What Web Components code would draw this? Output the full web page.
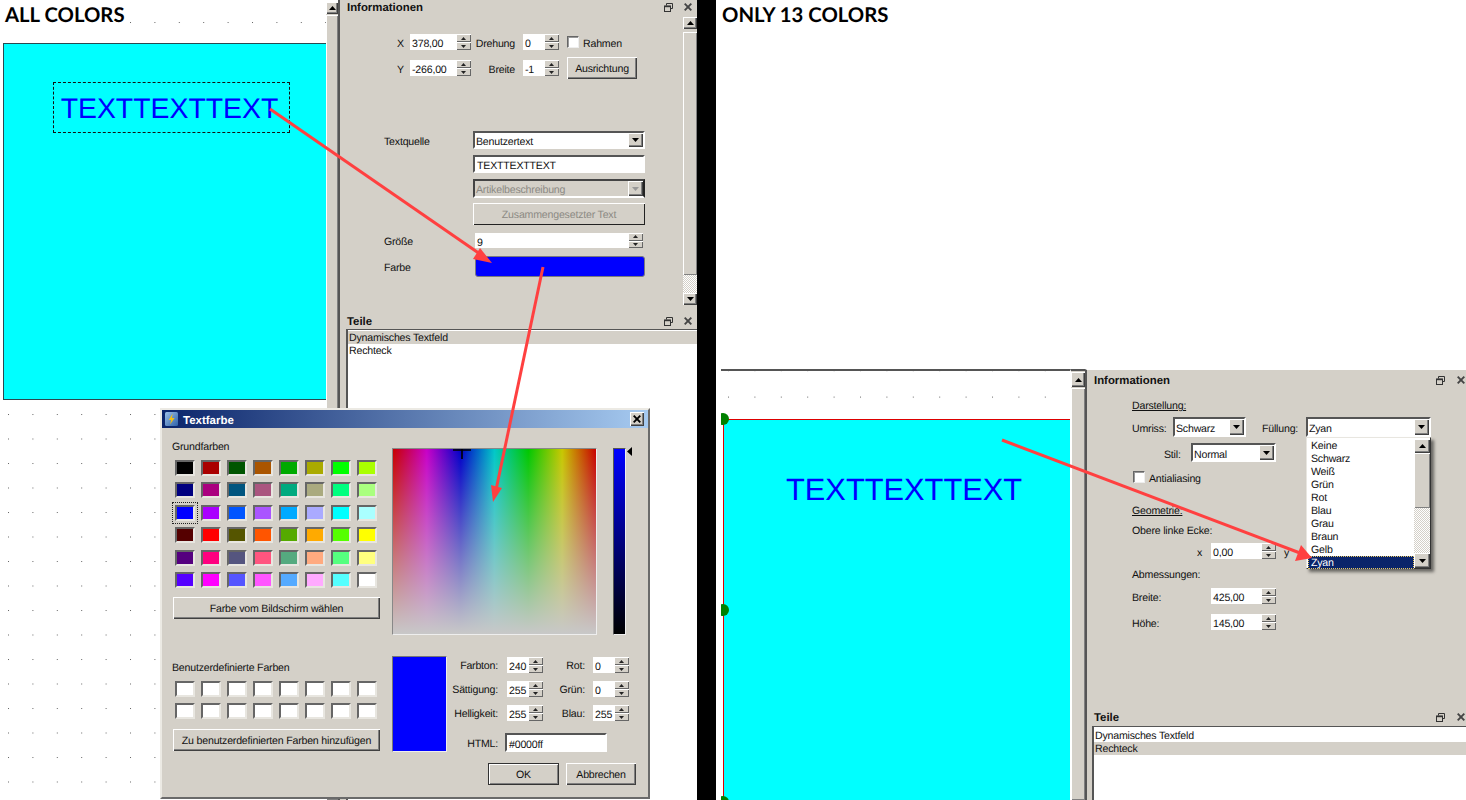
<!DOCTYPE html>
<html lang="de"><head><meta charset="utf-8"><title>Farben</title>
<style>
html,body{margin:0;padding:0;background:#fff}
body{width:1466px;height:800px;overflow:hidden;font:10.6px/14px "Liberation Sans",sans-serif;letter-spacing:-.2px;color:#111;text-rendering:geometricPrecision}
</style></head><body>
<x-stage>
  <x-workspace-left>
    <x-dialog></x-dialog>
  </x-workspace-left>
  <x-gap></x-gap>
  <x-workspace-right></x-workspace-right>
</x-stage>
<script>
const define=(name,css,render)=>customElements.define(name,class extends HTMLElement{
  connectedCallback(){ if(this.shadowRoot) return;
    const s=this.attachShadow({mode:'open'});
    s.innerHTML='<style>'+css+'</style>'+render(this);
  }
});
const A=(e,n,d)=>e.hasAttribute(n)?e.getAttribute(n):d;
const RAISED='box-shadow:inset 1px 1px 0 #fff,inset -1px -1px 0 #404040,inset -2px -2px 0 #808080;background:#d4d0c8;';
const tri=(up,c='#000',s=3)=>`<svg width="${s*2+1}" height="${s+1}" viewBox="0 0 ${s*2+1} ${s+1}" style="display:block"><polygon fill="${c}" points="${up?`0,${s+1} ${s*2+1},${s+1} ${s+.5},0`:`0,0 ${s*2+1},0 ${s+.5},${s+1}`}"/></svg>`;

define('x-gap',`:host{display:block;background:#000}`,()=>``);

define('x-spin',`:host{display:inline-flex;box-sizing:border-box}
 .i{background:#fff;padding:4px 0 0 2px;box-sizing:border-box;line-height:inherit;display:flex;align-items:center;white-space:nowrap}
 .b{width:15px;display:flex;flex-direction:column}
 .b div{flex:1;display:flex;align-items:center;justify-content:center;background:#d4d0c8;box-shadow:inset 1px 1px 0 #fff,inset -1px -1px 0 #666}`,
 e=>{const h=A(e,'h',16);return `<div class="i" style="width:${A(e,'w',46)}px;height:${h}px">${A(e,'value','')}</div><div class="b" style="height:${h}px"><div>${tri(1,'#222',2)}</div><div>${tri(0,'#222',2)}</div></div>`});

define('x-combo',`:host{display:flex;box-sizing:border-box;border:2px solid;border-color:#555 #fff #fff #555;background:#fff;align-items:stretch}
 :host([disabled]){background:#d4d0c8;color:#8c8a84;border-color:#444 #222 #fff #444}
 .t{flex:1;padding:4px 0 0 1px;display:flex;align-items:center;white-space:nowrap}
 :host([disabled]) .t{padding-top:2px}
 .a{width:15px;display:flex;align-items:center;justify-content:center;${RAISED}}`,
 e=>`<div class="t">${A(e,'value','')}</div><div class="a">${tri(0,e.hasAttribute('disabled')?'#999':'#000',3)}</div>`);

define('x-field',`:host{display:flex;align-items:center;box-sizing:border-box;border:2px solid;border-color:#555 #fff #fff #555;background:#fff;padding:4px 0 0 2px}`,e=>A(e,'value',''));

define('x-btn',`:host{display:flex;align-items:center;justify-content:center;box-sizing:border-box;white-space:nowrap;padding-top:2px;${RAISED}}
 :host([disabled]){color:#8c8a84;box-shadow:inset 1px 1px 0 #fff,inset -1px -1px 0 #222}
 :host([def]){outline:1px solid #333;outline-offset:-1px;box-shadow:inset 2px 2px 0 #fff,inset -2px -2px 0 #808080}`,()=>`<slot></slot>`);

define('x-check',`:host{display:flex;align-items:center;white-space:nowrap}
 .c{width:12px;height:12px;box-sizing:border-box;background:#fff;border:1px solid;border-color:#666 #eee #eee #666;box-shadow:inset 1px 1px 0 #999;margin-right:4px}
 span{padding-top:4px}`,
 e=>`<div class="c"></div><span><slot></slot></span>`);

define('x-sb',`:host{display:flex;flex-direction:column;box-sizing:border-box;background:#d4d0c8}
 .u{display:flex;align-items:center;justify-content:center;flex:none;${RAISED}}
 .t{${RAISED}box-shadow:inset 1px 1px 0 #fff,inset -1px -1px 0 #808080}
 .h{background:conic-gradient(#fff 25%,#d4d0c8 0 50%,#fff 0 75%,#d4d0c8 0);background-size:2px 2px}`,
 e=>{const up=A(e,'up',12),th=e.getAttribute('thumb'),ha=e.getAttribute('hatch'),dn=e.getAttribute('down'),gap=A(e,'gap',1);
  return `<div class="u" style="height:${up}px">${tri(1,'#000',3)}</div>
  <div class="t" style="margin-top:${gap}px;${th?`height:${th}px;flex:none`:'flex:1'}"></div>
  ${ha?`<div class="h" style="height:${ha}px;flex:none"></div>`:''}
  ${dn?`<div class="u" style="height:${dn}px">${tri(0,'#000',3)}</div>`:''}`});

define('x-dock-head',`:host{display:flex;align-items:center;padding-left:7px;box-sizing:border-box;font-weight:700;font-size:11.4px;letter-spacing:0;flex:none}
 .s{flex:1}
 span{padding-top:2px}
 svg{display:block;flex:none}`,
 e=>`<span>${A(e,'label','')}</span><div class="s"></div>
 <svg width="9" height="9" viewBox="0 0 9 9" fill="none" stroke="#333"><path d="M2.5 2.5V.5h6v5h-2"/><rect x=".5" y="3" width="6" height="5.5" fill="#d4d0c8"/><path d="M.5 3.5h6" stroke-width="1.4"/></svg>
 <svg width="8" height="8" viewBox="0 0 8 8" style="margin:0 ${A(e,'pr',5)}px 0 ${A(e,'gap',11)}px" fill="none" stroke="#444" stroke-width="1.9"><path d="M.7.7l6.6 6.6M7.3.7L.7 7.3"/></svg>`);

define('x-list',`:host{display:block;flex:1;background:#fff;box-sizing:border-box;border-top:1px solid #555;border-left:2px solid #555}
 div{height:13px;line-height:14px;padding-left:1px;white-space:nowrap}
 .sel{background:#d4d0c8}`,
 e=>`<style>:host{padding-top:${A(e,'pt',1)}px}</style>`+A(e,'items','').split('|').map((t,i)=>`<div class="${String(i)===A(e,'sel','')?'sel':''}">${t}</div>`).join(''));

define('x-canvas',`:host{display:block;position:relative;overflow:hidden;background:#fff}
 svg{position:absolute;left:0;top:0}`,
 e=>{const dx=+A(e,'dx',24.4),dy=+A(e,'dy',24.5),ox=+A(e,'ox',8),oy=+A(e,'oy',22);
  return `<svg width="100%" height="100%"><defs><pattern id="p" patternUnits="userSpaceOnUse" width="${dx}" height="${dy}" x="${ox}" y="${oy}"><rect width="1" height="1" fill="#666"/></pattern></defs><rect width="100%" height="100%" fill="url(#p)"/></svg><slot></slot>`});

define('x-shape',`:host{display:block;position:absolute;box-sizing:border-box;background:#0ff}`,()=>`<slot></slot>`);

define('x-label-text',`:host{position:absolute;display:block;color:#00f;font:var(--fs,28.4px)/1 "Liberation Sans",sans-serif;letter-spacing:0;white-space:nowrap}`,()=>`<slot></slot>`);

define('x-handle',`:host{position:absolute;display:block;width:12px;height:12px;border-radius:50%;background:#008000}`,()=>``);

define('x-note',`:host{position:absolute;z-index:4;display:block;background:#fff;color:#000;font:700 20.3px/26px Lato,"Open Sans",sans-serif;letter-spacing:0;white-space:nowrap;padding-right:4px}`,()=>`<slot></slot>`);

define('x-swatches',`:host{display:grid;grid-template-columns:repeat(8,20px);column-gap:6px;row-gap:6.4px}
 .s{position:relative;height:16px;box-sizing:border-box;border:2px solid;border-color:#666 #e8e6e0 #e8e6e0 #666}
 .f::after{content:"";position:absolute;left:-5px;top:-5px;width:26px;height:22px;box-sizing:border-box;border:1px dotted #222}`,
 e=>A(e,'colors','').split(' ').map((c,i)=>`<div class="s${String(i)===A(e,'focus','')?' f':''}" style="background:#${c}"></div>`).join(''));

define('x-dropdown',`:host{position:absolute;z-index:3;display:flex;box-sizing:border-box;width:125px;height:132px;background:#fff;border:1px solid;border-color:#e8e6e0 #333 #333 #e8e6e0;box-shadow:3px 3px 3px rgba(0,0,0,.5);padding:1px 0 0 1px}
 .l{flex:1;min-width:0}
 .l div{height:13px;line-height:15px;padding-left:3px;white-space:nowrap}
 .l .sel{background:#0a246a;color:#fff;outline:1px dotted #e8c860;outline-offset:-1px}
 x-sb{width:16px}`,
 e=>`<div class="l">${A(e,'items','').split('|').map((t,i,a)=>`<div class="${i==a.length-1?'sel':''}">${t}</div>`).join('')}</div>
 <x-sb up="14" gap="0" thumb="55" hatch="45" down="15"></x-sb>`);

const GRUND='000000 aa0000 005500 aa5500 00aa00 aaaa00 00ff00 aaff00 00007f aa007f 00557f aa557f 00aa7f aaaa7f 00ff7f aaff7f 0000ff aa00ff 0055ff aa55ff 00aaff aaaaff 00ffff aaffff 550000 ff0000 555500 ff5500 55aa00 ffaa00 55ff00 ffff00 55007f ff007f 55557f ff557f 55aa7f ffaa7f 55ff7f ffff7f 5500ff ff00ff 5555ff ff55ff 55aaff ffaaff 55ffff ffffff';
const WHITE=Array(16).fill('ffffff').join(' ');

define('x-dialog',`:host{position:absolute;left:160px;top:408px;width:490px;height:391px;z-index:2;box-sizing:border-box;background:#d4d0c8;border:2px solid;border-color:#eceae4 #6a6a6a #6a6a6a #eceae4;display:flex;flex-direction:column}
 .tb{height:18px;flex:none;display:flex;align-items:center;background:linear-gradient(90deg,#0a246a,#a6caf0);color:#fff;font-weight:700;font-size:11.5px;letter-spacing:0;padding-left:3px}
 .tb svg{margin-right:5px;display:block}
 .tb span{padding-top:3px}
 .cl{margin-left:auto;margin-right:4px;width:14px;height:14px;display:flex;align-items:center;justify-content:center;${RAISED}}
 .bd{display:flex;padding-left:10px;flex:1}
 .lc{width:208px;display:flex;flex-direction:column}
 .rc{margin-left:12px;display:flex;flex-direction:column}
 .sw{margin-left:3px}
 .top{display:flex;margin-top:20px;position:relative}
 .grad{width:205px;height:187px;box-sizing:border-box;border:1px solid;border-color:#888 #eee #eee #888;background:linear-gradient(180deg,rgba(200,200,200,0),#c8c8c8),linear-gradient(90deg,#c80000,#c800c8 16.67%,#0000c8 33.33%,#00c8c8 50%,#00c800 66.67%,#c8c800 83.33%,#c80000);position:relative}
 .cross{position:absolute;left:60px;top:0}
 .strip{margin-left:16px;width:13px;height:187px;background:linear-gradient(180deg,#00f,#000);box-sizing:border-box;border:1px solid;border-color:#555 #eee #eee #555}
 .ptr{margin-left:1px;margin-top:-1px;display:block}
 .bot{display:flex;margin-top:21px}
 .prev{width:55px;height:96px;background:#00f;box-sizing:border-box;border:1px solid;border-color:#777 #eee #eee #777}
 .form{display:grid;grid-template-columns:51px 45px 42px 44px;grid-template-rows:16px 16px 16px 23px;row-gap:8px;margin-top:1px;align-items:center}
 .form span{text-align:right;white-space:nowrap;padding-top:2px}
 .form x-spin{margin-left:9px}
 .form .g2{margin-left:8px}
 .html{grid-column:1/-1;display:flex;align-items:center;height:19px;align-self:end}
 .html span{width:51px}
 .html x-field{margin-left:7px;width:102px;height:19px}
 .btns{display:flex;margin:11px 0 0 96px;gap:7px}`,
 ()=>{
  const sp=(v)=>`<x-spin value="${v}" w="21" h="16"></x-spin>`;
  const sp2=(v)=>`<x-spin class="g2" value="${v}" w="21" h="16"></x-spin>`;
  return `<div class="tb"><svg width="13" height="14" viewBox="0 0 13 14"><defs><linearGradient id="ig" x1="0" y1="0" x2="1" y2="1"><stop offset="0" stop-color="#9cc0e8"/><stop offset="1" stop-color="#2f62a8"/></linearGradient></defs><rect width="13" height="14" rx="1.5" fill="url(#ig)"/><path d="M7.8 1.5L3.6 8h2.6L5 12.5 9.6 6H6.8z" fill="#f2c014"/></svg><span>Textfarbe</span><div class="cl"><svg width="8" height="8" viewBox="0 0 8 8" style="margin:0" fill="none" stroke="#000" stroke-width="1.9"><path d="M.7.7l6.6 6.6M7.3.7L.7 7.3"/></svg></div></div>
  <div class="bd">
   <div class="lc">
    <div style="margin-top:12px">Grundfarben</div>
    <x-swatches class="sw" style="margin-top:6px" focus="16" colors="${GRUND}"></x-swatches>
    <x-btn style="margin:9px 0 0 1px;width:207px;height:22px">Farbe vom Bildschirm wählen</x-btn>
    <div style="margin-top:42px">Benutzerdefinierte Farben</div>
    <x-swatches class="sw" style="margin-top:6px" colors="${WHITE}"></x-swatches>
    <x-btn style="margin:10px 0 0 1px;width:207px;height:22px">Zu benutzerdefinierten Farben hinzufügen</x-btn>
   </div>
   <div class="rc">
    <div class="top">
     <div class="grad"><svg class="cross" width="18" height="11" viewBox="0 0 18 11"><path d="M0 1h18M9 0v10" stroke="#000" stroke-width="1.6"/></svg></div>
     <div class="strip"></div>
     <svg class="ptr" width="5" height="9" viewBox="0 0 5 9"><polygon points="5,0 5,9 0,4.5" fill="#000"/></svg>
    </div>
    <div class="bot">
     <div class="prev"></div>
     <div class="form">
      <span>Farbton:</span>${sp(240)}<span>Rot:</span>${sp2(0)}
      <span>Sättigung:</span>${sp(255)}<span>Grün:</span>${sp2(0)}
      <span>Helligkeit:</span>${sp(255)}<span>Blau:</span>${sp2(255)}
      <div class="html"><span>HTML:</span><x-field value="#0000ff"></x-field></div>
     </div>
    </div>
    <div class="btns"><x-btn def style="width:71px;height:22px">OK</x-btn><x-btn style="width:70px;height:22px">Abbrechen</x-btn></div>
   </div>
  </div>`});

define('x-info-left',`:host{display:flex;flex-direction:column;height:313px;flex:none}
 x-dock-head{height:14px}
 .main{display:flex;flex:1;min-height:0}
 .f{flex:1;min-width:0}
 x-sb{width:14px;margin:3px 0 8px;}
 .top{display:grid;grid-template-columns:13px 61px 44px 45px 1fr;grid-template-rows:16px 22px;row-gap:7px;align-items:center;margin:20px 0 0 57px}
 .top span{padding-top:3px}
 .r{text-align:right}
 .top x-spin.d{margin-left:8px}
 .top .l{margin-left:7px}
 .src{margin:52px 0 0 44px;display:flex;flex-direction:column}
 .row{display:grid;grid-template-columns:89px 172px;align-items:center}
 .row>span{padding-top:3px}
 .swatch{height:21px;margin-left:2px;width:170px;background:#00f;border-radius:3px;border:1.5px solid #7a7a80;box-sizing:border-box}`,
 ()=>`<x-dock-head label="Informationen"></x-dock-head>
 <div class="main"><div class="f">
  <div class="top">
   <span>X</span><x-spin value="378,00" w="46"></x-spin><span class="r">Drehung</span><x-spin class="d" value="0" w="21"></x-spin><x-check class="l">Rahmen</x-check>
   <span>Y</span><x-spin value="-266,00" w="46"></x-spin><span class="r">Breite</span><x-spin class="d" value="-1" w="21"></x-spin><x-btn class="l" style="width:70px;height:22px">Ausrichtung</x-btn>
  </div>
  <div class="src">
   <div class="row" style="height:18px"><span>Textquelle</span><x-combo value="Benutzertext" style="height:18px"></x-combo></div>
   <div class="row" style="height:18px;margin-top:6px"><span></span><x-field value="TEXTTEXTTEXT" style="height:18px"></x-field></div>
   <div class="row" style="height:19px;margin-top:6px"><span></span><x-combo disabled value="Artikelbeschreibung" style="height:19px"></x-combo></div>
   <div class="row" style="height:22px;margin-top:5px"><span></span><x-btn disabled style="height:22px">Zusammengesetzter Text</x-btn></div>
   <div class="row" style="height:15px;margin-top:7px"><span>Größe</span><x-spin value="9" w="153" h="15" style="margin-left:2px"></x-spin></div>
   <div class="row" style="height:21px;margin-top:9px"><span>Farbe</span><div class="swatch"></div></div>
  </div>
 </div><x-sb up="12" gap="3" thumb="243" hatch="18" down="12"></x-sb></div>`);

define('x-info-right',`:host{display:flex;flex-direction:column;height:338px;flex:none;padding-left:45px;position:relative}
 .hd{margin-left:-45px}
 x-dock-head{height:20px}
 u{display:block;text-underline-offset:1px}
 .row{display:flex;align-items:center;white-space:nowrap}
 .row>span{padding-top:4px}
 .wrap{position:relative;width:125px;height:20px}
 x-dropdown{left:0;top:20px}`,
 ()=>`<x-dock-head class="hd" label="Informationen" pr="1" gap="12"></x-dock-head>
 <u style="margin-top:9px">Darstellung:</u>
 <div class="row" style="height:20px;margin-top:4px">
  <span style="width:41px">Umriss:</span><x-combo value="Schwarz" style="width:73px;height:20px"></x-combo>
  <span style="width:44px;margin-left:16px">Füllung:</span>
  <div class="wrap"><x-combo value="Zyan" style="width:125px;height:20px"></x-combo><x-dropdown items="Keine|Schwarz|Weiß|Grün|Rot|Blau|Grau|Braun|Gelb|Zyan"></x-dropdown></div>
 </div>
 <div class="row" style="height:19px;margin-top:6px"><span style="width:27px;margin-left:32px">Stil:</span><x-combo value="Normal" style="width:85px;height:19px"></x-combo></div>
 <x-check style="margin:9px 0 0 1px;height:12px">Antialiasing</x-check>
 <u style="margin-top:21px">Geometrie:</u>
 <div style="margin-top:6px">Obere linke Ecke:</div>
 <div class="row" style="height:16px;margin-top:5px"><span style="width:14px;margin-left:65px">x</span><x-spin value="0,00" w="50"></x-spin><span style="margin-left:8px">y</span></div>
 <div style="margin-top:9px">Abmessungen:</div>
 <div class="row" style="height:16px;margin-top:6px"><span style="width:79px">Breite:</span><x-spin value="425,00" w="50"></x-spin></div>
 <div class="row" style="height:16px;margin-top:10px"><span style="width:79px">Höhe:</span><x-spin value="145,00" w="50"></x-spin></div>`);

define('x-workspace-left',`:host{display:flex;position:relative;width:697px;height:800px;overflow:visible}
 x-canvas{width:326px;height:800px;flex:none}
 .sb{width:12px;flex:none;margin-top:2px}
 .dock{width:359px;flex:none;box-sizing:border-box;border-left:2px solid #555;background:#d4d0c8;display:flex;flex-direction:column;min-width:0}
 .t{height:16px}
 .lw{display:flex;flex:1;padding-left:6px}
 #rect{left:3px;top:43px;width:330px;height:357px;border:1px solid #2a4a50}
 #sel{left:49px;top:38px;width:237px;height:51px;border:1px dashed #111;display:flex;align-items:center;justify-content:center;padding:3px 4px 0 0}
 x-label-text{position:static}
 x-note{left:0;top:2px;padding-left:5px}`,
 ()=>`<x-note>ALL COLORS</x-note>
 <x-canvas><x-shape id="rect"><x-shape id="sel"><x-label-text>TEXTTEXTTEXT</x-label-text></x-shape></x-shape></x-canvas>
 <x-sb class="sb" up="12" gap="1"></x-sb>
 <div class="dock"><x-info-left></x-info-left>
  <x-dock-head class="t" label="Teile"></x-dock-head>
  <div class="lw"><x-list items="Dynamisches Textfeld|Rechteck" sel="0"></x-list></div>
 </div><slot></slot>`);

define('x-workspace-right',`:host{display:block;position:relative;width:750px;height:800px;box-sizing:border-box;padding:369px 0 0 5px}
 x-note{left:2px;top:2px;padding-left:4px}
 .row{display:flex;height:431px}
 x-canvas{width:349px;flex:none;border-top:2px solid #555;box-sizing:border-box}
 .sb{flex:none;border-left:1px solid #fff;border-top:2px solid #555;padding-top:1px;width:15px;box-sizing:border-box}
 .dock{width:381px;flex:none;box-sizing:border-box;border-left:2px solid #555;border-top:1px solid #fff;background:#d4d0c8;display:flex;flex-direction:column}
 .t{height:18px}
 .lw{display:flex;flex:1;padding-left:5px;overflow:hidden}
 #rect{left:2px;top:48px;width:360px;height:420px;border-left:1px solid #d00;border-top:1px solid #d00}
 #h1{left:-4px;top:42px}#h2{left:-4px;top:233px}#h3{left:-4px;top:425px}
 x-label-text{--fs:30.8px;left:62px;top:55px}`,
 ()=>`<x-note>ONLY 13 COLORS</x-note>
 <div class="row">
  <x-canvas dx="26.4" dy="26.4" ox="7" oy="25.6"><x-shape id="rect"><x-label-text>TEXTTEXTTEXT</x-label-text></x-shape><x-handle id="h1"></x-handle><x-handle id="h2"></x-handle><x-handle id="h3"></x-handle></x-canvas>
  <x-sb class="sb" up="15" gap="1"></x-sb>
  <div class="dock"><x-info-right></x-info-right>
   <x-dock-head class="t" label="Teile" pr="1" gap="12"></x-dock-head>
   <div class="lw"><x-list pt="2" items="Dynamisches Textfeld|Rechteck" sel="1"></x-list></div>
  </div>
 </div>`);

define('x-arrows',`:host{position:absolute;left:0;top:0;z-index:9;display:block;pointer-events:none}
 svg{display:block}`,
 ()=>`<svg width="1466" height="800" viewBox="0 0 1466 800"><g stroke="#ff4040" stroke-width="3" fill="none"><path d="M270 109L480 254"/><path d="M543 267L496 490"/><path d="M1002 440L1300 553"/></g>
 <g fill="#ff4040"><polygon points="492,263 480,248 473,259"/><polygon points="493,502 491,485 502,488"/><polygon points="1312,558 1301,545 1295,561"/></g></svg>`);

define('x-stage',`:host{display:grid;grid-template-columns:697px 19px 750px;width:1466px;height:800px;position:relative;overflow:hidden}`,
 ()=>`<slot></slot><x-arrows></x-arrows>`);
</script>
</body></html>
